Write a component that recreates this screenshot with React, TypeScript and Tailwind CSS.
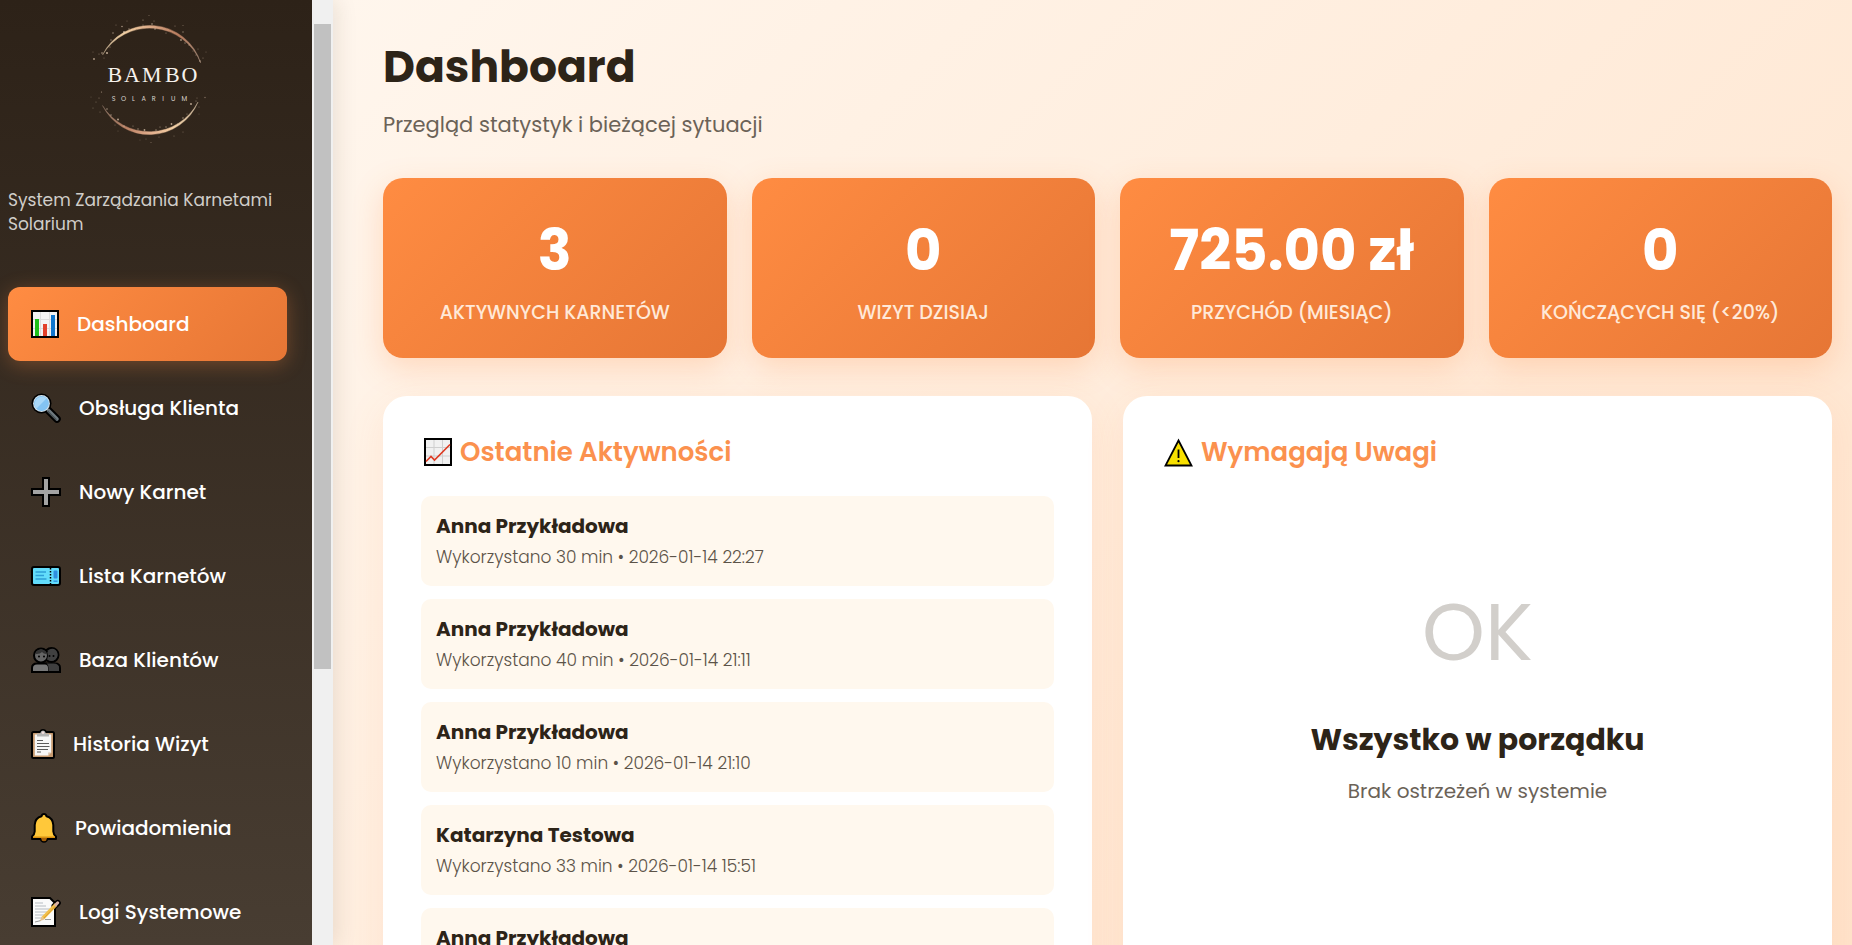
import type { ReactNode } from "react";

/* ---------- Logo ---------- */

const sparks: [number, number, number, number][] = [
  [14, 54, 0.9, 0.9], [19, 49, 0.6, 0.6], [22, 48, 0.8, 0.9], [27, 48, 1, 1], [24, 53, 0.5, 0.6],
  [13, 47, 0.5, 0.5], [30, 42, 0.6, 0.7], [31, 35, 0.7, 0.7], [33, 28, 0.8, 0.7], [36, 20, 0.5, 0.6],
  [42, 21.5, 0.8, 0.8], [44, 27, 1, 0.9], [49, 24, 0.7, 0.8], [47, 16, 0.5, 0.5], [63, 15, 0.6, 0.8],
  [63, 20, 0.6, 0.7], [69, 10.5, 0.5, 0.6], [72, 19, 0.8, 0.9], [75, 24, 0.8, 0.8], [74, 16, 0.5, 0.7],
  [86, 28, 0.6, 0.7], [95, 21, 0.6, 0.6], [103, 20.5, 0.5, 0.6], [103, 27, 0.7, 0.7], [101, 35, 0.9, 0.8],
  [105, 38, 0.7, 0.7], [109, 40, 0.6, 0.8], [113, 46, 0.5, 0.6], [118, 44, 0.6, 0.5], [116, 50, 0.6, 0.7],
  [126, 47, 0.5, 0.5], [123, 53, 0.6, 0.6], [120, 56, 0.8, 0.8],
  [11, 92, 0.5, 0.4], [16, 97, 0.6, 0.5], [19, 93, 0.6, 0.6], [21.5, 87, 0.6, 0.8], [13, 103, 0.6, 0.5],
  [20, 107, 0.5, 0.6], [27, 104, 0.8, 0.8], [31, 110, 0.8, 0.7], [38, 114.5, 1, 0.9], [35, 120, 0.5, 0.6],
  [44, 121, 0.7, 0.8], [53, 121, 0.6, 0.7], [58, 124, 0.7, 0.8], [64.5, 125, 0.9, 0.9], [60, 135, 0.5, 0.4],
  [66, 134, 0.5, 0.5], [71, 137.5, 0.6, 0.5], [76, 125, 0.7, 0.8], [80, 122, 0.6, 0.8], [79, 132, 0.5, 0.6],
  [86, 122, 0.7, 0.8], [91.5, 119, 0.9, 0.9], [98, 119, 0.7, 0.7], [94, 131, 0.6, 0.5], [103, 127, 0.5, 0.6],
  [103, 113, 0.8, 0.8], [107, 109, 0.6, 0.7], [111, 99, 0.9, 1], [116, 96, 0.6, 0.7], [119, 102, 0.5, 0.5],
  [117, 93, 0.5, 0.6], [125, 92.5, 0.7, 0.6], [119, 109, 0.5, 0.4], [38, 126, 0.5, 0.4],
];

function Logo() {
  return (
    <svg width="136" height="145" viewBox="0 0 136 145" role="img" aria-label="Bambo Solarium">
      <defs>
        <linearGradient id="ringTop" x1="0" y1="0" x2="1" y2="0">
          <stop offset="0" stopColor="#b9a488" />
          <stop offset="0.22" stopColor="#f1cfa2" />
          <stop offset="0.5" stopColor="#d9a785" />
          <stop offset="0.78" stopColor="#b87b5d" />
          <stop offset="1" stopColor="#a58a78" />
        </linearGradient>
        <linearGradient id="ringBottom" x1="0" y1="0" x2="1" y2="0">
          <stop offset="0" stopColor="#8d7565" />
          <stop offset="0.25" stopColor="#b98064" />
          <stop offset="0.5" stopColor="#e2ae8c" />
          <stop offset="0.75" stopColor="#f3cfa4" />
          <stop offset="1" stopColor="#cbb79c" />
        </linearGradient>
      </defs>
      <path
        d="M22.5 50A53 53 0 0 1 120.7 58A54.800 54.800 0 0 0 22.5 50Z"
        fill="url(#ringTop)"
        stroke="url(#ringTop)"
        strokeWidth="0.4"
      />
      <path
        d="M22.5 100.5A52.500 52.500 0 0 0 118 97A54.800 54.800 0 0 1 22.5 100.5Z"
        fill="url(#ringBottom)"
        stroke="url(#ringBottom)"
        strokeWidth="0.4"
      />
      {sparks.map(([x, y, r, o], i) => (
        <circle key={i} cx={x} cy={y} r={r} fill="#e6cdb4" opacity={o * 0.8} />
      ))}
      <text x="27.5 44 62 85 101.5" y="77" fontFamily="'Liberation Serif', serif" fontSize="22" fill="#f6f1ec">
        BAMBO
      </text>
      <text
        x="31.7 41 52 61.5 71.7 82.3 91 101.5"
        y="95.7"
        fontFamily="Poppins, Inter, sans-serif"
        fontSize="6.5"
        fill="#dcd7d1"
      >
        SOLARIUM
      </text>
    </svg>
  );
}

/* ---------- Pictograms ---------- */

function BarsIcon() {
  return (
    <svg width="28" height="28" viewBox="0 0 28 28" aria-hidden="true">
      <rect x="1" y="1" width="26" height="26" fill="#f3f3f3" stroke="#000" strokeWidth="2" />
      <path d="M9.500 2v24M18.500 2v24M2 9.500h24M2 18.500h24" stroke="#dcdcdc" strokeWidth="1" />
      <rect x="4" y="9" width="4" height="17" fill="#1fc01a" />
      <rect x="12" y="14" width="4" height="12" fill="#e2402a" />
      <rect x="20" y="5" width="4" height="21" fill="#1077cf" />
    </svg>
  );
}

function MagnifierIcon() {
  return (
    <svg width="30" height="30" viewBox="0 0 30 30" aria-hidden="true">
      <path d="M17.500 17.500L26 26" stroke="#000" strokeWidth="7.500" strokeLinecap="round" />
      <circle cx="10.500" cy="10.500" r="10" fill="#000" />
      <path d="M17.500 17.500L26 26" stroke="#6f7a80" strokeWidth="3.600" strokeLinecap="round" />
      <path d="M17 18.500L25 26.500" stroke="#444c50" strokeWidth="1.200" strokeLinecap="round" />
      <circle cx="10.500" cy="10.500" r="8.400" fill="#d4e3ec" />
      <circle cx="10.500" cy="10.500" r="7.400" fill="#83c3f2" />
      <path d="M5.300 15.700A7.400 7.400 0 0 1 15.700 5.300Z" fill="#a9d8f8" />
    </svg>
  );
}

function PlusIcon() {
  return (
    <svg width="30" height="30" viewBox="0 0 30 30" aria-hidden="true">
      <path d="M11 0h8v11h11v8H19v11h-8V19H0v-8h11Z" fill="#000" />
      <path d="M13 2h4v11h11v4H17v11h-4V17H2v-4h11Z" fill="#a3a3a3" />
    </svg>
  );
}

function TicketIcon() {
  return (
    <svg width="30" height="20" viewBox="0 0 30 20" aria-hidden="true">
      <rect x="1" y="1" width="28" height="18" rx="2" fill="#62dcfb" stroke="#000" strokeWidth="2" />
      <path d="M4.500 6H15M4.500 9.500H13M4.500 13H15.500" stroke="#2e9fd8" strokeWidth="1.400" />
      <path d="M19.500 2v16" stroke="#000" strokeWidth="1.500" strokeDasharray="1.500 1.500" />
      <rect x="22.500" y="4.500" width="4" height="8" rx="1" fill="#2f8fe0" />
      <path d="M22.500 15.200h4" stroke="#2f8fe0" strokeWidth="1.400" />
    </svg>
  );
}

function PeopleIcon() {
  return (
    <svg width="30" height="26" viewBox="0 0 30 26" aria-hidden="true">
      <path d="M11 25v-4q0-4.500 5-4.500h8q5 0 5 4.500v4Z" fill="#3b3b3b" stroke="#000" strokeWidth="2" />
      <circle cx="20.500" cy="8" r="7" fill="#3d3d3d" stroke="#000" strokeWidth="2" />
      <path d="M1 25v-4q0-4.500 5-4.500h8q4 0 4 4.500v4Z" fill="#777" stroke="#000" strokeWidth="2" />
      <path d="M17.500 24v-3.500q0-3-2-4h7q5.500 0 5.500 4.500v3Z" fill="#3f3f3f" />
      <circle cx="10" cy="8.500" r="7" fill="#666" stroke="#000" strokeWidth="2" />
      <path d="M16.300 5.500q1.500 3.500-.3 7q3 2 6.500 1q4-2 4-6t-3.500-5.500q-4-1.500-6.700 3.500Z" fill="#404040" />
      <path d="M4.200 7q1-4.500 5.800-4.500t6 4.500q-3 .5-5-2q-2 2.500-6.800 2Z" fill="#333" />
      <circle cx="8" cy="9.500" r="1" fill="#000" />
      <circle cx="13" cy="9.500" r="1" fill="#000" />
      <circle cx="18.500" cy="9" r="1" fill="#000" />
      <circle cx="22.500" cy="9" r="1" fill="#000" />
    </svg>
  );
}

function ClipboardIcon() {
  return (
    <svg width="24" height="30" viewBox="0 0 24 30" aria-hidden="true">
      <path d="M8 3q1-3 4-3t4 3Z" fill="#000" />
      <rect x="1" y="3" width="22" height="26" rx="1.500" fill="#c69a70" stroke="#000" strokeWidth="2" />
      <path d="M3.800 5.500h16.400v18l-3 3H3.800Z" fill="#f7f7f7" />
      <path d="M17.200 26.500v-3h3Z" fill="#d9c3ad" />
      <path d="M6 4.500h3q1-3 3-3t3 3h3v3H6Z" fill="#b4b4b4" />
      <circle cx="12" cy="3.800" r="1.300" fill="#f0dcdc" />
      <path d="M6 11.500h6M6 14.500h12M6 17.500h12.500M6 20.500h11M6 23h4" stroke="#5b5b5b" strokeWidth="1" />
    </svg>
  );
}

function BellIcon() {
  return (
    <svg width="26" height="30" viewBox="0 0 26 30" aria-hidden="true">
      <circle cx="13" cy="25.500" r="3.500" fill="#a96208" stroke="#000" strokeWidth="1.500" />
      <path
        d="M13 1q2 0 2.500 2.200Q22 5 22.300 12v6.500q.2 3 2.700 5V26H1v-2.500q2.500-2 2.700-5V12Q4 5 10.500 3.200Q11 1 13 1Z"
        fill="#ffc83a"
        stroke="#000"
        strokeWidth="2"
        strokeLinejoin="round"
      />
      <path d="M2 23.500h22V25H2Z" fill="#d9900f" />
      <path d="M10 25h6q-.5 3-3 3t-3-3Z" fill="#a96208" />
    </svg>
  );
}

function MemoIcon() {
  return (
    <svg width="30" height="30" viewBox="0 0 30 30" aria-hidden="true">
      <path d="M1 1h18l5 5v23H1Z" fill="#fafafa" stroke="#000" strokeWidth="2" />
      <path d="M4 6h8M4 9h11M4 12h15M4 15h15M4 18h12M4 21h8" stroke="#b5bcc2" strokeWidth="1.200" />
      <path d="M4 25q4-1 6-1.500M14 22.500h6" stroke="#9a9a9a" strokeWidth="1" />
      <path d="M23.500 9L26.800 6" stroke="#000" strokeWidth="6" strokeLinecap="round" />
      <path d="M12 21L25 7.500" stroke="#f3c04b" strokeWidth="3.600" />
      <path d="M12.500 21.500L25.500 8" stroke="#d79a2c" strokeWidth="0.900" />
      <path d="M24.800 7.800L26.700 5.800" stroke="#d9b2a6" strokeWidth="3" strokeLinecap="round" />
      <path d="M10.500 19.500L9 24l4.500-1.500Z" fill="#e6c28f" />
    </svg>
  );
}

function TrendIcon() {
  return (
    <svg width="28" height="28" viewBox="0 0 28 28" aria-hidden="true">
      <rect x="1" y="1" width="26" height="26" fill="#f1f1f1" stroke="#000" strokeWidth="2" />
      <path d="M10 2v24M18.500 2v24M2 9.500h24M2 18h24" stroke="#cfcfcf" strokeWidth="1" />
      <path d="M2 23.500L7 18.500L10.500 22L26 6.500" fill="none" stroke="#dd3a22" strokeWidth="1.600" />
    </svg>
  );
}

function WarningIcon() {
  return (
    <svg width="29" height="29" viewBox="0 0 29 29" aria-hidden="true">
      <path d="M14.500 2.500L27.500 27.500H1.500Z" fill="#f8e000" stroke="#000" strokeWidth="1.800" />
      <path d="M14.500 11.500v8.500" stroke="#000" strokeWidth="1.800" />
      <circle cx="14.500" cy="23.200" r="1.100" fill="#000" />
    </svg>
  );
}

/* ---------- Data ---------- */

const navItems: { label: string; icon: ReactNode; active?: boolean }[] = [
  { label: "Dashboard", icon: <BarsIcon />, active: true },
  { label: "Obsługa Klienta", icon: <MagnifierIcon /> },
  { label: "Nowy Karnet", icon: <PlusIcon /> },
  { label: "Lista Karnetów", icon: <TicketIcon /> },
  { label: "Baza Klientów", icon: <PeopleIcon /> },
  { label: "Historia Wizyt", icon: <ClipboardIcon /> },
  { label: "Powiadomienia", icon: <BellIcon /> },
  { label: "Logi Systemowe", icon: <MemoIcon /> },
];

const stats = [
  { value: "3", label: "Aktywnych karnetów" },
  { value: "0", label: "Wizyt dzisiaj" },
  { value: "725.00 zł", label: "Przychód (miesiąc)" },
  { value: "0", label: "Kończących się (<20%)" },
];

const activities: { name: string; detail?: string }[] = [
  { name: "Anna Przykładowa", detail: "Wykorzystano 30 min • 2026-01-14 22:27" },
  { name: "Anna Przykładowa", detail: "Wykorzystano 40 min • 2026-01-14 21:11" },
  { name: "Anna Przykładowa", detail: "Wykorzystano 10 min • 2026-01-14 21:10" },
  { name: "Katarzyna Testowa", detail: "Wykorzystano 33 min • 2026-01-14 15:51" },
  { name: "Anna Przykładowa" },
];

/* ---------- Layout ---------- */

function Sidebar() {
  return (
    <aside className="z-10 flex shrink-0 shadow-[4px_0_20px_rgba(45,36,22,0.1)]">
      <div className="flex w-[312px] flex-col overflow-hidden bg-linear-to-b from-[#2d2218] to-[#483d32] pt-[5px] pr-[25px] pl-2">
        <div className="flex shrink-0 justify-center">
          <Logo />
        </div>
        <p className="mt-[38px] text-[17px] leading-6 text-[#d0cdc9]">System Zarządzania Karnetami Solarium</p>
        <nav className="mt-[51px] flex flex-col gap-2.5">
          {navItems.map((item) => (
            <button
              key={item.label}
              type="button"
              className={
                item.active
                  ? "flex h-[74px] shrink-0 items-center gap-[18px] rounded-xl bg-linear-135 from-[#ff8c42] to-[#e67635] px-[23px] text-left text-xl font-medium text-white shadow-[0_4px_20px_rgba(255,140,66,0.3)]"
                  : "flex h-[74px] shrink-0 items-center gap-[18px] rounded-xl px-[23px] text-left text-xl font-medium text-white"
              }
            >
              {item.icon}
              {item.label}
            </button>
          ))}
        </nav>
      </div>
      <div className="flex w-[21px] flex-col bg-[#f0f0f0] px-0.5 pt-6" aria-hidden="true">
        <div className="h-[70%] bg-[#c1c1c1]" />
      </div>
    </aside>
  );
}

function Panel({ icon, title, children }: { icon: ReactNode; title: string; children: ReactNode }) {
  return (
    <section className="min-h-[640px] rounded-3xl bg-white p-[38px] shadow-[0_10px_40px_rgba(255,140,66,0.1)]">
      <h2 className="flex items-center gap-2 pl-[3px] text-[26px] leading-9 font-semibold text-[#fb914e]">
        {icon}
        {title}
      </h2>
      {children}
    </section>
  );
}

export default function App() {
  return (
    <div className="flex h-screen overflow-hidden font-[Poppins,Inter,sans-serif] text-[#2d2418]">
      <Sidebar />
      <main className="min-w-0 flex-1 overflow-hidden bg-linear-135 from-[#fff6ed] to-[#ffe3cb] pt-[37px] pr-5 pl-[50px]">
        <header>
          <h1 className="text-[44px] leading-[60px] font-bold">Dashboard</h1>
          <p className="mt-3 text-[21px] leading-8 text-[#6b6257]">Przegląd statystyk i bieżącej sytuacji</p>
        </header>

        <div className="mt-[37px] grid grid-cols-4 gap-[25px]">
          {stats.map((stat) => (
            <div
              key={stat.label}
              className="rounded-[20px] bg-linear-135 from-[#ff8c42] to-[#e67635] px-4 pt-[37px] pb-[31px] text-center shadow-[0_10px_30px_rgba(255,140,66,0.25)]"
            >
              <div className="text-[56px] leading-[72px] font-bold text-white">{stat.value}</div>
              <div className="mt-3 text-[19px] leading-7 font-medium text-[#ffe9d8] uppercase">{stat.label}</div>
            </div>
          ))}
        </div>

        <div className="mt-[38px] grid grid-cols-2 gap-[31px]">
          <Panel icon={<TrendIcon />} title="Ostatnie Aktywności">
            <ul className="mt-[26px] flex flex-col gap-[13px]">
              {activities.map((activity, i) => (
                <li key={i} className="min-h-[90px] rounded-[10px] bg-[#fff8ee] px-[15px] pt-4">
                  <div className="text-xl leading-7 font-bold">{activity.name}</div>
                  {activity.detail && (
                    <div className="mt-[3px] text-[17px] leading-7 font-light text-[#5c5348]">{activity.detail}</div>
                  )}
                </li>
              ))}
            </ul>
          </Panel>

          <Panel icon={<WarningIcon />} title="Wymagają Uwagi">
            <div className="mt-[102px] text-center">
              <div className="text-[80px] leading-[120px] text-[#d2cfcb]">OK</div>
              <h3 className="mt-[26px] text-[30px] leading-[44px] font-bold">Wszystko w porządku</h3>
              <p className="mt-3.5 text-xl leading-[30px] text-[#6b6257]">Brak ostrzeżeń w systemie</p>
            </div>
          </Panel>
        </div>
      </main>
    </div>
  );
}
